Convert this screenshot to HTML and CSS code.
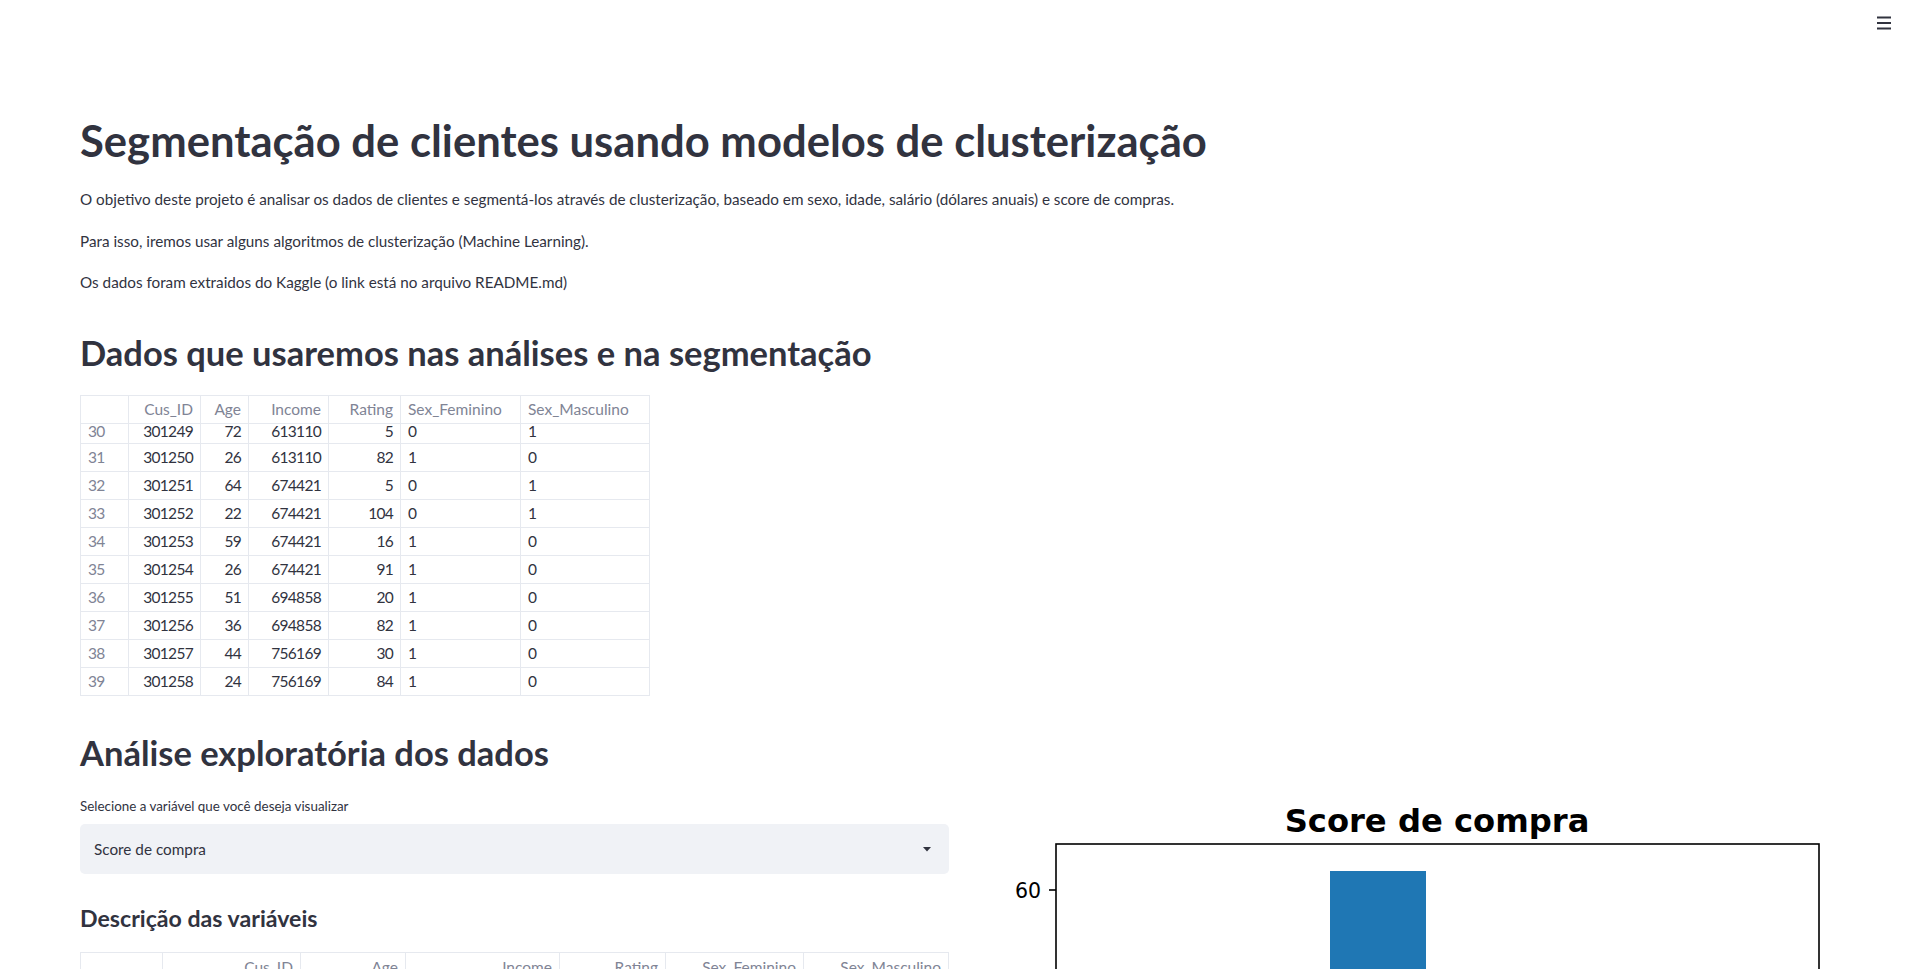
FILE: index.html
```html
<!DOCTYPE html>
<html lang="pt">
<head>
<meta charset="utf-8">
<title>Segmentação de clientes</title>
<link rel="stylesheet" href="styles.css">
</head>
<body>
<header class="topbar">
  <button class="menu-btn" aria-label="Menu">
    <svg width="16" height="16" viewBox="0 0 16 16"><rect x="1" y="1.5" width="14" height="2" fill="#31333F"/><rect x="1" y="7" width="14" height="2" fill="#31333F"/><rect x="1" y="12.5" width="14" height="2" fill="#31333F"/></svg>
  </button>
</header>
<main class="main">
  <h1 class="title">Segmentação de clientes usando modelos de clusterização</h1>
  <p class="text">O objetivo deste projeto é analisar os dados de clientes e segmentá-los através de clusterização, baseado em sexo, idade, salário (dólares anuais) e score de compras.</p>
  <p class="text">Para isso, iremos usar alguns algoritmos de clusterização (Machine Learning).</p>
  <p class="text last">Os dados foram extraidos do Kaggle (o link está no arquivo README.md)</p>

  <h2 class="subtitle">Dados que usaremos nas análises e na segmentação</h2>

  <div class="df df-data">
    <div class="row head">
      <div class="cell idx"></div><div class="cell num">Cus_ID</div><div class="cell num">Age</div><div class="cell num">Income</div><div class="cell num">Rating</div><div class="cell">Sex_Feminino</div><div class="cell">Sex_Masculino</div>
    </div>
    <div class="row body partial"><div class="cell idx">30</div><div class="cell num">301249</div><div class="cell num">72</div><div class="cell num">613110</div><div class="cell num">5</div><div class="cell">0</div><div class="cell">1</div></div>
    <div class="row body"><div class="cell idx">31</div><div class="cell num">301250</div><div class="cell num">26</div><div class="cell num">613110</div><div class="cell num">82</div><div class="cell">1</div><div class="cell">0</div></div>
    <div class="row body"><div class="cell idx">32</div><div class="cell num">301251</div><div class="cell num">64</div><div class="cell num">674421</div><div class="cell num">5</div><div class="cell">0</div><div class="cell">1</div></div>
    <div class="row body"><div class="cell idx">33</div><div class="cell num">301252</div><div class="cell num">22</div><div class="cell num">674421</div><div class="cell num">104</div><div class="cell">0</div><div class="cell">1</div></div>
    <div class="row body"><div class="cell idx">34</div><div class="cell num">301253</div><div class="cell num">59</div><div class="cell num">674421</div><div class="cell num">16</div><div class="cell">1</div><div class="cell">0</div></div>
    <div class="row body"><div class="cell idx">35</div><div class="cell num">301254</div><div class="cell num">26</div><div class="cell num">674421</div><div class="cell num">91</div><div class="cell">1</div><div class="cell">0</div></div>
    <div class="row body"><div class="cell idx">36</div><div class="cell num">301255</div><div class="cell num">51</div><div class="cell num">694858</div><div class="cell num">20</div><div class="cell">1</div><div class="cell">0</div></div>
    <div class="row body"><div class="cell idx">37</div><div class="cell num">301256</div><div class="cell num">36</div><div class="cell num">694858</div><div class="cell num">82</div><div class="cell">1</div><div class="cell">0</div></div>
    <div class="row body"><div class="cell idx">38</div><div class="cell num">301257</div><div class="cell num">44</div><div class="cell num">756169</div><div class="cell num">30</div><div class="cell">1</div><div class="cell">0</div></div>
    <div class="row body last"><div class="cell idx">39</div><div class="cell num">301258</div><div class="cell num">24</div><div class="cell num">756169</div><div class="cell num">84</div><div class="cell">1</div><div class="cell">0</div></div>
  </div>

  <h2 class="subtitle eda">Análise exploratória dos dados</h2>

  <div class="cols">
    <div class="col col-left">
      <label class="sel-label">Selecione a variável que você deseja visualizar</label>
      <div class="select">
        <span class="sel-value">Score de compra</span>
        <svg class="sel-arrow" width="8" height="5" viewBox="0 0 8 5"><path d="M0 0 H8 L4 4.5 Z" fill="#31333F"/></svg>
      </div>
      <h3 class="minor">Descrição das variáveis</h3>
      <div class="df df-desc">
        <div class="row head">
          <div class="cell idx"></div><div class="cell num">Cus_ID</div><div class="cell num">Age</div><div class="cell num">Income</div><div class="cell num">Rating</div><div class="cell num">Sex_Feminino</div><div class="cell num">Sex_Masculino</div>
        </div>
      </div>
    </div>
    <div class="col col-right">
      <svg class="chart" width="869" height="240" viewBox="0 0 869 240">
        <rect x="360" y="76" width="96" height="200" fill="#1f77b4"/>
        <rect x="86" y="49" width="763" height="230" fill="none" stroke="#000" stroke-width="1.6"/>
        <line x1="79" y1="95" x2="86" y2="95" stroke="#000" stroke-width="1.6"/>
        <text x="71" y="102.5" text-anchor="end" class="tick-label">60</text>
        <text x="467" y="37" text-anchor="middle" class="chart-title">Score de compra</text>
      </svg>
    </div>
  </div>
</main>
</body>
</html>
```

FILE: styles.css
```css
* { box-sizing: border-box; }
html, body { margin: 0; padding: 0; background: #ffffff; }
body {
  font-family: "Lato", "Noto Sans", sans-serif;
  color: #31333F;
  overflow: hidden;
}

.topbar {
  position: fixed;
  top: 0; left: 0; right: 0;
  display: flex;
  justify-content: flex-end;
  padding: 15px 27px 0 0;
  pointer-events: none;
}
.menu-btn {
  width: 16px; height: 16px;
  padding: 0; margin: 0;
  border: none; background: transparent;
  display: block;
}
.menu-btn svg { display: block; }

.main {
  padding: 114px 80px 160px 80px;
}

.title {
  margin: 0 0 20px 0;
  font-size: 43.6px;
  line-height: 53px;
  font-weight: 700;
}

.text {
  margin: 0 0 16px 0;
  font-size: 15.25px;
  line-height: 25.6px;
}
.text.last { margin-bottom: 35px; }

.subtitle {
  margin: 0 0 21px 0;
  font-size: 34.5px;
  line-height: 43px;
  font-weight: 700;
}
.subtitle.eda { margin-top: 35px; margin-bottom: 21px; }

/* dataframe */
.df {
  border: 1px solid #e6e9ef;
  font-size: 15.5px;
}
.row {
  display: grid;
  height: 28px;
  border-bottom: 1px solid #e6e9ef;
}
.row.partial { height: 20px; }
.row.last { height: 27px; border-bottom: none; }
.cell {
  border-right: 1px solid #e6e9ef;
  padding: 0 7px;
  line-height: 14px;
  white-space: nowrap;
  display: flex;
  align-items: center;
}
.row.partial .cell { align-items: flex-start; }
.cell:last-child { border-right: none; }
.cell.num { justify-content: flex-end; }
.cell.idx { color: #808495; }
.head .cell { color: #808495; }
.body .cell.num, .body .cell.idx { letter-spacing: -0.7px; }

.df-data { width: 570px; }
.df-data .row { grid-template-columns: 48px 72px 48px 80px 72px 120px 128px; }

.df-desc { width: 869px; }
.df-desc .row { grid-template-columns: 82px 138px 105px 154px 106px 138px 144px; }

/* columns */
.cols {
  display: grid;
  grid-template-columns: 869px 869px;
  column-gap: 21px;
  margin-top: 20px;
}
.sel-label {
  display: block;
  font-size: 13.4px;
  line-height: 22.4px;
  margin-bottom: 7px;
}
.select {
  height: 50px;
  background: #f0f2f6;
  border-radius: 5px;
  display: flex;
  align-items: center;
  justify-content: space-between;
  padding: 0 18px 0 14px;
  font-size: 15.3px;
}
.sel-arrow { display: block; }
.minor {
  margin: 30px 0 19px 0;
  font-size: 23.15px;
  line-height: 29px;
  font-weight: 700;
}

.chart { display: block; overflow: visible; }
.chart-title {
  font-family: "DejaVu Sans", sans-serif;
  font-weight: 700;
  font-size: 32.2px;
  fill: #000;
}
.tick-label {
  font-family: "DejaVu Sans", sans-serif;
  font-size: 20.5px;
  fill: #000;
}
```
